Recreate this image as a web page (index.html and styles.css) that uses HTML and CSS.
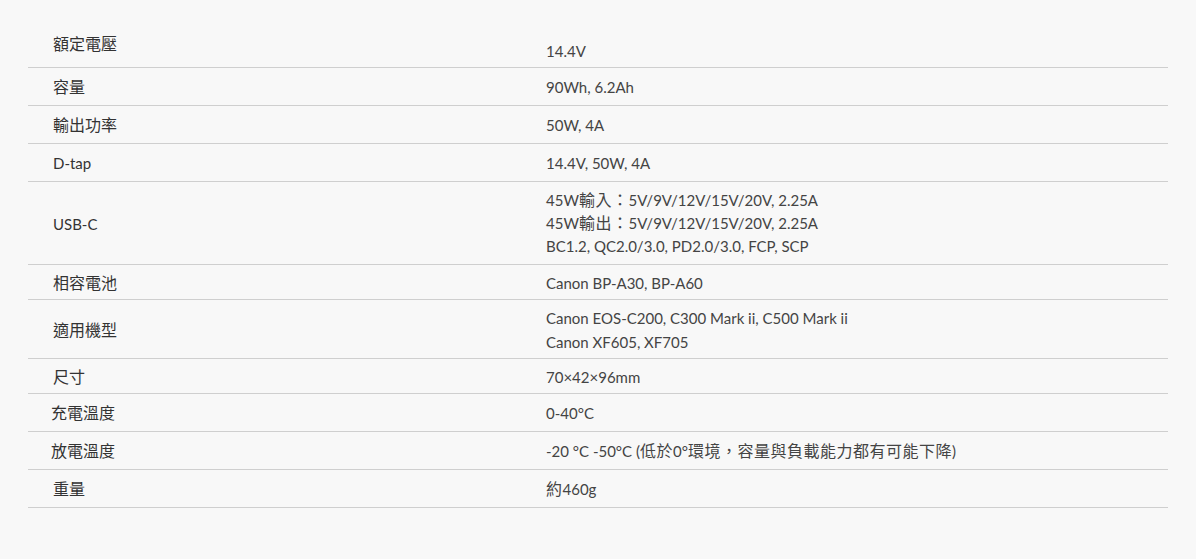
FILE: index.html
```html
<!DOCTYPE html>
<html lang="zh-Hant">
<head>
<meta charset="UTF-8">
<meta name="viewport" content="width=device-width, initial-scale=1.0">
<title>規格</title>
<link rel="stylesheet" href="styles.css">
</head>
<body>
<div class="specs">
    <table class="spec-table">
        <tr class="first">
            <th>額定電壓</th>
            <td>14.4V</td>
        </tr>
        <tr>
            <th>容量</th>
            <td>90Wh, 6.2Ah</td>
        </tr>
        <tr>
            <th>輸出功率</th>
            <td>50W, 4A</td>
        </tr>
        <tr>
            <th class="en">D-tap</th>
            <td>14.4V, 50W, 4A</td>
        </tr>
        <tr class="multi">
            <th class="en">USB-C</th>
            <td>45W<span class="cjk">輸入：</span>5V/9V/12V/15V/20V, 2.25A<br>45W<span class="cjk">輸出：</span>5V/9V/12V/15V/20V, 2.25A<br>BC1.2, QC2.0/3.0, PD2.0/3.0, FCP, SCP</td>
        </tr>
        <tr class="compact">
            <th>相容電池</th>
            <td>Canon BP-A30, BP-A60</td>
        </tr>
        <tr class="compact">
            <th>適用機型</th>
            <td>Canon EOS-C200, C300 Mark ii, C500 Mark ii<br>Canon XF605, XF705</td>
        </tr>
        <tr class="compact">
            <th>尺寸</th>
            <td>70×42×96mm</td>
        </tr>
        <tr>
            <th class="shift">充電溫度</th>
            <td>0-40°C</td>
        </tr>
        <tr>
            <th class="shift">放電溫度</th>
            <td>-20 °C -50°C (<span class="cjk">低於</span>0°<span class="cjk">環境，容量與負載能力都有可能下降</span>)</td>
        </tr>
        <tr>
            <th>重量</th>
            <td><span class="cjk">約</span>460g</td>
        </tr>
    </table>
</div>
</body>
</html>
```

FILE: styles.css
```css
body {
    margin: 0;
    background-color: #f8f8f8;
    font-family: Lato, "Noto Sans CJK TC", sans-serif;
    color: #333;
}
.specs {
    padding: 29px 28px 40px 28px;
}
.spec-table {
    width: 100%;
    border-collapse: collapse;
}
.spec-table tr {
    border-bottom: 1px solid #cfcfcf;
}
.spec-table th {
    width: 493px;
    padding: 7px 0 6px 25px;
    text-align: left;
    font-weight: normal;
    font-size: 16px;
    line-height: 24px;
    vertical-align: middle;
    color: #333;
}
.spec-table th.en {
    font-size: 15px;
}
.spec-table th.shift {
    padding-left: 23px;
}
.spec-table td {
    padding: 7px 0 6px 0;
    font-size: 15px;
    line-height: 24px;
    color: #444;
    vertical-align: middle;
}
.spec-table td .cjk {
    font-size: 16px;
    line-height: 1;
    letter-spacing: 0.5px;
}
.spec-table tr.first th {
    padding-top: 3px;
    padding-bottom: 11px;
}
.spec-table tr.first td {
    padding-top: 10px;
    padding-bottom: 4px;
}
.spec-table tr.multi td {
    line-height: 23px;
}
.spec-table tr.compact th,
.spec-table tr.compact td {
    padding-top: 6px;
    padding-bottom: 4px;
}
```
